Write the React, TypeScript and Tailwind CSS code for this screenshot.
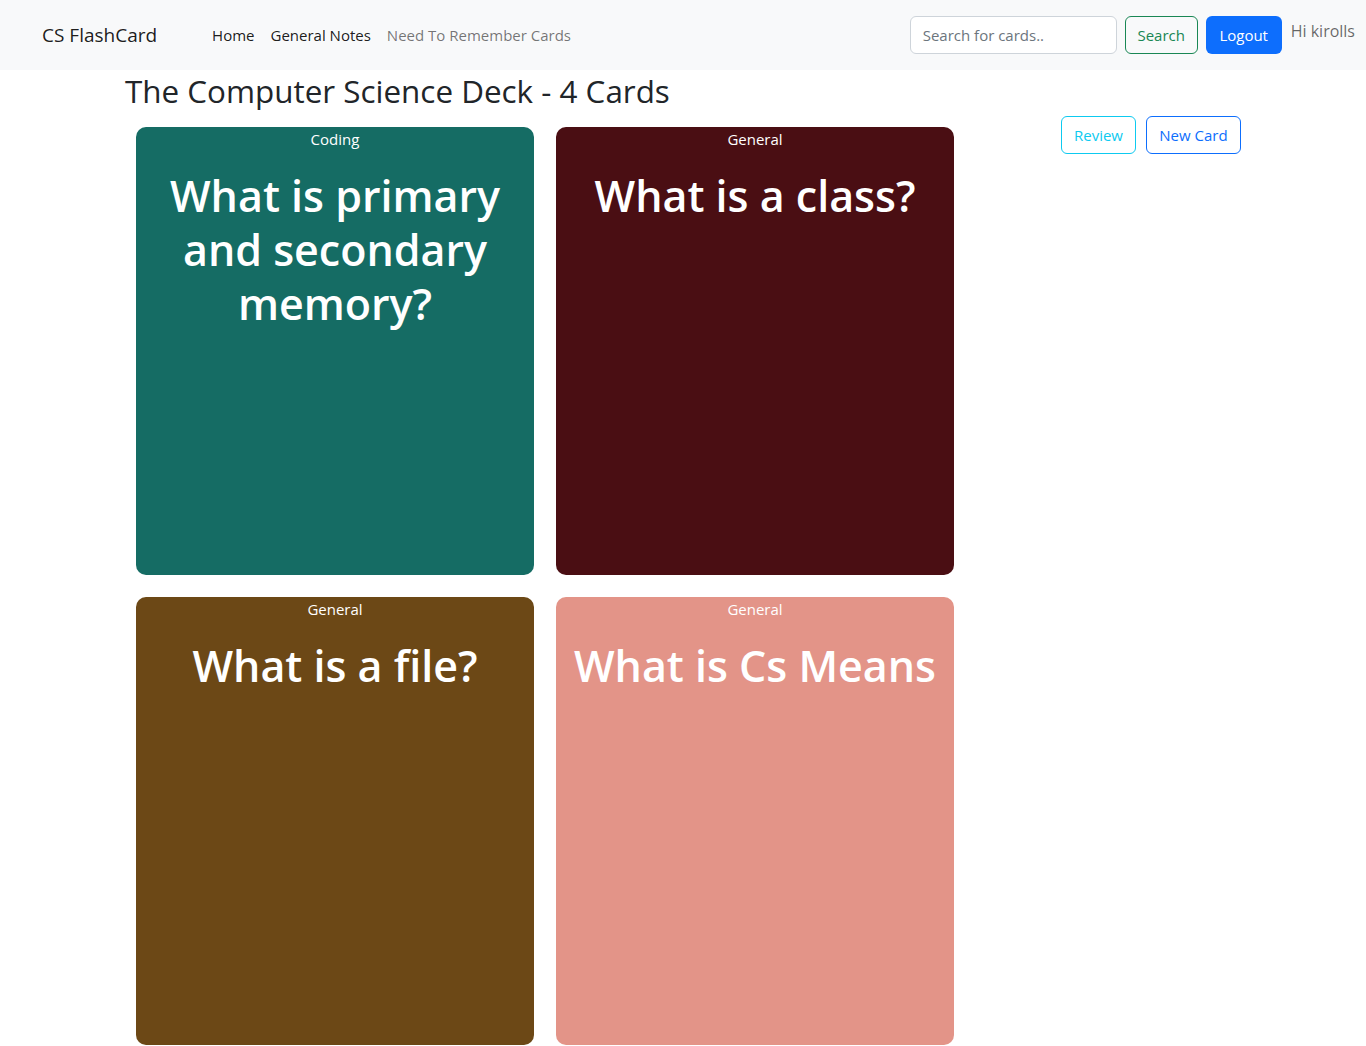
import React from "react";

const cards = [
  { cat: "Coding", q: "What is primary and secondary memory?", bg: "bg-[#156c64]" },
  { cat: "General", q: "What is a class?", bg: "bg-[#4a0e13]" },
  { cat: "General", q: "What is a file?", bg: "bg-[#6c4816]" },
  { cat: "General", q: "What is Cs Means", bg: "bg-[#e39488]" },
];

export default function App() {
  return (
    <div className="min-h-[1046px] bg-white text-[#212529] font-['Open_Sans',sans-serif]">
      <nav className="h-[70px] bg-[#f8f9fa] flex items-center pl-[42px] pr-[11px]">
        <span className="text-[19px] text-[rgba(0,0,0,0.9)] mr-[55px]">CS FlashCard</span>
        <div className="flex items-center gap-[16px] text-[15px]">
          <span className="text-[rgba(0,0,0,0.9)]">Home</span>
          <span className="text-[rgba(0,0,0,0.9)]">General Notes</span>
          <span className="text-[rgba(0,0,0,0.55)]">Need To Remember Cards</span>
        </div>
        <div className="ml-auto flex items-center">
          <div className="w-[207px] h-[38px] border border-[#ced4da] rounded-[6px] bg-white flex items-center px-[12px] text-[15px] text-[#6c757d]">
            Search for cards..
          </div>
          <div className="ml-[8px] w-[73px] h-[38px] border border-[#198754] rounded-[6px] flex items-center justify-center text-[15px] text-[#198754]">
            Search
          </div>
          <div className="ml-[8px] w-[76px] h-[38px] rounded-[6px] bg-[#0d6efd] flex items-center justify-center text-[15px] text-white">
            Logout
          </div>
          <div className="ml-[9px] self-start mt-[3px] text-[16px] text-[rgba(0,0,0,0.6)]">Hi kirolls</div>
        </div>
      </nav>
      <div className="pl-[125px]">
        <h2 className="text-[31.4px] font-medium leading-[42px]">The Computer Science Deck - 4 Cards</h2>
      </div>
      <div className="flex pl-[136px] pr-[125px] mt-[15px]">
        <div className="grid grid-cols-[398px_398px] gap-[22px]">
          {cards.map((c, i) => (
            <div key={i} className={`${c.bg} w-[398px] h-[448px] rounded-[10px] text-white text-center px-[12px]`}>
              <div className="text-[15px] leading-[24px]">{c.cat}</div>
              <div className="mt-[18px] text-[43px] font-semibold leading-[54px]">{c.q}</div>
            </div>
          ))}
        </div>
        <div className="ml-auto flex gap-[10px] -mt-[11px]">
          <div className="h-[38px] w-[75px] border border-[#0dcaf0] rounded-[6px] flex items-center justify-center text-[15px] text-[#0dcaf0]">Review</div>
          <div className="h-[38px] w-[95px] border border-[#0d6efd] rounded-[6px] flex items-center justify-center text-[15px] text-[#0d6efd]">New Card</div>
        </div>
      </div>
    </div>
  );
}
